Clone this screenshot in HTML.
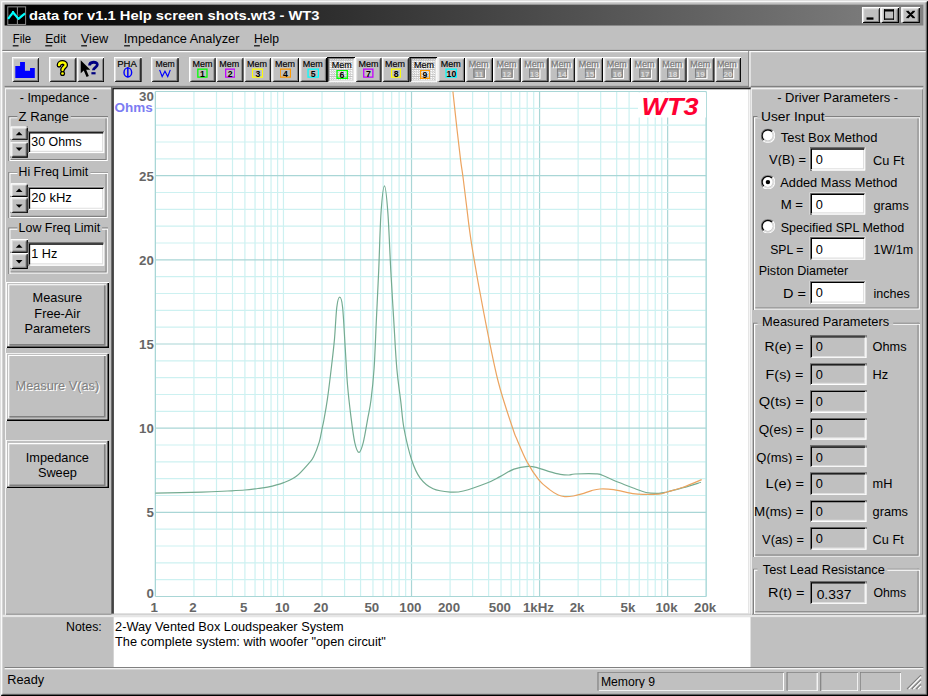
<!DOCTYPE html>
<html><head><meta charset="utf-8"><style>
html,body{margin:0;padding:0;width:928px;height:696px;overflow:hidden;background:#c0c0c0;}
#w{position:absolute;left:0;top:0;width:800px;height:600px;transform:scale(1.16);transform-origin:0 0;}
#w div{position:absolute;box-sizing:border-box;}
.t{white-space:pre;font-family:"Liberation Sans",sans-serif;}
</style></head><body>
<div id="w">
<div style="left:0px;top:0px;width:800px;height:600px;background:#c0c0c0;box-shadow:inset 1px 1px #dfdfdf,inset -1px -1px #000,inset 2px 2px #fff,inset -2px -2px #808080;"></div>
<div style="left:4px;top:4.4px;width:792px;height:18.1px;background:linear-gradient(90deg,#000 0%,#828282 100%);"></div>
<svg style="left:6px;top:5px;position:absolute" width="17" height="17" viewBox="0 0 17 17"><rect x="0.7" y="0.9" width="15.4" height="15.2" fill="#000" stroke="#8a8a8a" stroke-width="0.9"/><line x1="9" y1="1" x2="9" y2="16" stroke="#8a8a8a" stroke-width="0.9"/><line x1="1" y1="8" x2="16" y2="8" stroke="#3a3a3a" stroke-width="0.8"/><polyline points="1,11.3 5.2,5.6 9.9,11.3 15.6,6.6" fill="none" stroke="#00ffff" stroke-width="1.9" stroke-linejoin="round"/><line x1="5.2" y1="4.4" x2="5.2" y2="7" stroke="#00ffff" stroke-width="1.6"/></svg>
<div class="t" style="left:25.3px;top:8.29px;font-size:11px;line-height:11px;font-weight:bold;color:#fff;transform:scaleX(1.1542);transform-origin:0 0;">data for v1.1 Help screen shots.wt3 - WT3</div>
<div style="left:743px;top:6px;width:16px;height:14px;background:#c0c0c0;box-shadow:inset 1px 1px #fff,inset -1px -1px #000,inset 2px 2px #dfdfdf,inset -2px -2px #808080;"></div>
<div style="left:759px;top:6px;width:16px;height:14px;background:#c0c0c0;box-shadow:inset 1px 1px #fff,inset -1px -1px #000,inset 2px 2px #dfdfdf,inset -2px -2px #808080;"></div>
<div style="left:777px;top:6px;width:16px;height:14px;background:#c0c0c0;box-shadow:inset 1px 1px #fff,inset -1px -1px #000,inset 2px 2px #dfdfdf,inset -2px -2px #808080;"></div>
<div style="left:747px;top:15px;width:6px;height:2px;background:#000;"></div>
<div style="left:762px;top:8px;width:9px;height:9px;box-shadow:inset 0 2px #000,inset 1px 0 #000,inset -1px 0 #000,inset 0 -1px #000;"></div>
<svg style="left:777px;top:6px;position:absolute" width="16" height="14" viewBox="0 0 16 14"><path d="M4.5 3.5 L10.5 9.5 M5.5 3.5 L11.5 9.5 M10.5 3.5 L4.5 9.5 M11.5 3.5 L5.5 9.5" stroke="#000" stroke-width="1"/></svg>
<div class="t" style="left:10.6px;top:27.69px;font-size:11px;line-height:11px;font-weight:normal;color:#000;transform:scaleX(0.8974);transform-origin:0 0;">File</div>
<div style="left:10.6px;top:38.6px;width:5.5px;height:1.1px;background:#000;"></div>
<div class="t" style="left:39px;top:27.69px;font-size:11px;line-height:11px;font-weight:normal;color:#000;transform:scaleX(0.9542);transform-origin:0 0;">Edit</div>
<div style="left:39px;top:38.6px;width:5.5px;height:1.1px;background:#000;"></div>
<div class="t" style="left:69.7px;top:27.69px;font-size:11px;line-height:11px;font-weight:normal;color:#000;">View</div>
<div style="left:69.7px;top:38.6px;width:5.5px;height:1.1px;background:#000;"></div>
<div class="t" style="left:106.7px;top:27.69px;font-size:11px;line-height:11px;font-weight:normal;color:#000;">Impedance Analyzer</div>
<div style="left:106.7px;top:38.6px;width:5.5px;height:1.1px;background:#000;"></div>
<div class="t" style="left:218.8px;top:27.69px;font-size:11px;line-height:11px;font-weight:normal;color:#000;transform:scaleX(0.9503);transform-origin:0 0;">Help</div>
<div style="left:218.8px;top:38.6px;width:5.5px;height:1.1px;background:#000;"></div>
<div style="left:2px;top:43px;width:796px;height:1px;background:#808080;"></div>
<div style="left:2px;top:44px;width:796px;height:1px;background:#fff;"></div>
<div style="left:10.4px;top:48.5px;width:23.84px;height:22.6px;background:#c0c0c0;box-shadow:inset 1px 1px #fff,inset -1px -1px #000,inset 2px 2px #dfdfdf,inset -2px -2px #808080;"></div>
<div style="left:42.2px;top:48.5px;width:23.84px;height:22.6px;background:#c0c0c0;box-shadow:inset 1px 1px #fff,inset -1px -1px #000,inset 2px 2px #dfdfdf,inset -2px -2px #808080;"></div>
<div style="left:66.1px;top:48.5px;width:23.84px;height:22.6px;background:#c0c0c0;box-shadow:inset 1px 1px #fff,inset -1px -1px #000,inset 2px 2px #dfdfdf,inset -2px -2px #808080;"></div>
<div style="left:98.4px;top:48.5px;width:23.84px;height:22.6px;background:#c0c0c0;box-shadow:inset 1px 1px #fff,inset -1px -1px #000,inset 2px 2px #dfdfdf,inset -2px -2px #808080;"></div>
<div style="left:130.4px;top:48.5px;width:23.84px;height:22.6px;background:#c0c0c0;box-shadow:inset 1px 1px #fff,inset -1px -1px #000,inset 2px 2px #dfdfdf,inset -2px -2px #808080;"></div>
<svg style="left:0;top:0;position:absolute" width="40" height="80" viewBox="0 0 40 80"><path d="M13.2 56.9 H17.3 V53.4 H21.5 V60.9 H25.9 V58.6 H30 V67.2 H13.2 Z" fill="#0000ff"/></svg>
<svg style="left:0;top:0;position:absolute" width="100" height="80" viewBox="0 0 100 80"><path d="M50.9 56.2 C50.9 53.2 56.6 53 56.6 56 C56.6 57.8 53.9 58.2 53.9 60.4" fill="none" stroke="#000" stroke-width="4.2" stroke-linecap="round"/><circle cx="53.9" cy="63.3" r="2.2" fill="#000"/><path d="M50.9 56.2 C50.9 53.2 56.6 53 56.6 56 C56.6 57.8 53.9 58.2 53.9 60.4" fill="none" stroke="#ffff00" stroke-width="2" stroke-linecap="round"/><circle cx="53.9" cy="63.3" r="1.1" fill="#ffff00"/><path d="M69.6 51.9 L69.6 63.2 L72.2 60.8 L74.6 66.4 L76.6 65.6 L74.3 60.2 L77.8 60.2 Z" fill="#000"/><path d="M77.2 56.4 C77.2 53 83.9 52.7 83.9 55.9 C83.9 58 80.5 58.1 80.5 60.6" fill="none" stroke="#000080" stroke-width="2.4"/><rect x="78.8" y="62.2" width="3.6" height="1.9" fill="#000080"/></svg>
<div class="t" style="left:101.3px;top:51.4px;font-size:8.5px;line-height:8.5px;font-weight:normal;color:#000;transform:scaleX(0.9666);transform-origin:0 0;-webkit-text-stroke:0.15px #000;">PHA</div>
<svg style="left:0;top:0;position:absolute" width="130" height="80" viewBox="0 0 130 80"><ellipse cx="110.2" cy="62.4" rx="3.3" ry="3.9" fill="none" stroke="#0000ff" stroke-width="1.2"/><line x1="110.2" y1="58" x2="110.2" y2="66.8" stroke="#0000ff" stroke-width="1.3"/></svg>
<div class="t" style="left:133.5px;top:51.4px;font-size:8.5px;line-height:8.5px;font-weight:normal;color:#000;transform:scaleX(0.8787);transform-origin:0 0;-webkit-text-stroke:0.15px #000;">Mem</div>
<svg style="left:0;top:0;position:absolute" width="160" height="80" viewBox="0 0 160 80"><polyline points="137.6,60.2 139.8,66 142.2,61.5 144.6,66 146.8,60.2" fill="none" stroke="#0000ff" stroke-width="1.0"/></svg>
<div style="left:162.6px;top:48.5px;width:23.84px;height:22.6px;background:#c0c0c0;box-shadow:inset 1px 1px #fff,inset -1px -1px #000,inset 2px 2px #dfdfdf,inset -2px -2px #808080;"></div>
<div class="t" style="left:165.5px;top:51.3px;font-size:8.5px;line-height:8.5px;font-weight:normal;color:#000;transform:scaleX(0.9105);transform-origin:0 0;-webkit-text-stroke:0.15px #000;">Mem</div>
<div style="left:169.8px;top:58.7px;width:9.6px;height:8.6px;box-shadow:inset 0 0 0 1.1px #00ff00;"></div>
<div class="t" style="left:172.51px;top:59.85px;font-size:7.5px;line-height:7.5px;font-weight:bold;color:#000;">1</div>
<div style="left:186.44px;top:48.5px;width:23.84px;height:22.6px;background:#c0c0c0;box-shadow:inset 1px 1px #fff,inset -1px -1px #000,inset 2px 2px #dfdfdf,inset -2px -2px #808080;"></div>
<div class="t" style="left:189.34px;top:51.3px;font-size:8.5px;line-height:8.5px;font-weight:normal;color:#000;transform:scaleX(0.9105);transform-origin:0 0;-webkit-text-stroke:0.15px #000;">Mem</div>
<div style="left:193.64px;top:58.7px;width:9.6px;height:8.6px;box-shadow:inset 0 0 0 1.1px #c000ff;"></div>
<div class="t" style="left:196.35px;top:59.85px;font-size:7.5px;line-height:7.5px;font-weight:bold;color:#000;">2</div>
<div style="left:210.28px;top:48.5px;width:23.84px;height:22.6px;background:#c0c0c0;box-shadow:inset 1px 1px #fff,inset -1px -1px #000,inset 2px 2px #dfdfdf,inset -2px -2px #808080;"></div>
<div class="t" style="left:213.18px;top:51.3px;font-size:8.5px;line-height:8.5px;font-weight:normal;color:#000;transform:scaleX(0.9105);transform-origin:0 0;-webkit-text-stroke:0.15px #000;">Mem</div>
<div style="left:217.48px;top:58.7px;width:9.6px;height:8.6px;box-shadow:inset 0 0 0 1.1px #ffff00;"></div>
<div class="t" style="left:220.19px;top:59.85px;font-size:7.5px;line-height:7.5px;font-weight:bold;color:#000;">3</div>
<div style="left:234.12px;top:48.5px;width:23.84px;height:22.6px;background:#c0c0c0;box-shadow:inset 1px 1px #fff,inset -1px -1px #000,inset 2px 2px #dfdfdf,inset -2px -2px #808080;"></div>
<div class="t" style="left:237.02px;top:51.3px;font-size:8.5px;line-height:8.5px;font-weight:normal;color:#000;transform:scaleX(0.9105);transform-origin:0 0;-webkit-text-stroke:0.15px #000;">Mem</div>
<div style="left:241.32px;top:58.7px;width:9.6px;height:8.6px;box-shadow:inset 0 0 0 1.1px #ff9900;"></div>
<div class="t" style="left:244.03px;top:59.85px;font-size:7.5px;line-height:7.5px;font-weight:bold;color:#000;">4</div>
<div style="left:257.96px;top:48.5px;width:23.84px;height:22.6px;background:#c0c0c0;box-shadow:inset 1px 1px #fff,inset -1px -1px #000,inset 2px 2px #dfdfdf,inset -2px -2px #808080;"></div>
<div class="t" style="left:260.86px;top:51.3px;font-size:8.5px;line-height:8.5px;font-weight:normal;color:#000;transform:scaleX(0.9105);transform-origin:0 0;-webkit-text-stroke:0.15px #000;">Mem</div>
<div style="left:265.16px;top:58.7px;width:9.6px;height:8.6px;box-shadow:inset 0 0 0 1.1px #00ffff;"></div>
<div class="t" style="left:267.87px;top:59.85px;font-size:7.5px;line-height:7.5px;font-weight:bold;color:#000;">5</div>
<div style="left:281.8px;top:48.5px;width:23.84px;height:22.6px;background-color:#c0c0c0;background-image:repeating-conic-gradient(#fff 0 25%,#c0c0c0 0 50%);background-size:2px 2px;box-shadow:inset 1px 1px #000,inset -1px -1px #fff,inset 2px 2px #808080,inset -2px -2px #dfdfdf;"></div>
<div class="t" style="left:285.7px;top:52.3px;font-size:8.5px;line-height:8.5px;font-weight:normal;color:#000;transform:scaleX(0.9105);transform-origin:0 0;-webkit-text-stroke:0.15px #000;">Mem</div>
<div style="left:290px;top:59.7px;width:9.6px;height:8.6px;box-shadow:inset 0 0 0 1.1px #00ff00;"></div>
<div class="t" style="left:292.71px;top:60.85px;font-size:7.5px;line-height:7.5px;font-weight:bold;color:#000;">6</div>
<div style="left:305.64px;top:48.5px;width:23.84px;height:22.6px;background:#c0c0c0;box-shadow:inset 1px 1px #fff,inset -1px -1px #000,inset 2px 2px #dfdfdf,inset -2px -2px #808080;"></div>
<div class="t" style="left:308.54px;top:51.3px;font-size:8.5px;line-height:8.5px;font-weight:normal;color:#000;transform:scaleX(0.9105);transform-origin:0 0;-webkit-text-stroke:0.15px #000;">Mem</div>
<div style="left:312.84px;top:58.7px;width:9.6px;height:8.6px;box-shadow:inset 0 0 0 1.1px #c000ff;"></div>
<div class="t" style="left:315.55px;top:59.85px;font-size:7.5px;line-height:7.5px;font-weight:bold;color:#000;">7</div>
<div style="left:329.48px;top:48.5px;width:23.84px;height:22.6px;background:#c0c0c0;box-shadow:inset 1px 1px #fff,inset -1px -1px #000,inset 2px 2px #dfdfdf,inset -2px -2px #808080;"></div>
<div class="t" style="left:332.38px;top:51.3px;font-size:8.5px;line-height:8.5px;font-weight:normal;color:#000;transform:scaleX(0.9105);transform-origin:0 0;-webkit-text-stroke:0.15px #000;">Mem</div>
<div style="left:336.68px;top:58.7px;width:9.6px;height:8.6px;box-shadow:inset 0 0 0 1.1px #ffff00;"></div>
<div class="t" style="left:339.39px;top:59.85px;font-size:7.5px;line-height:7.5px;font-weight:bold;color:#000;">8</div>
<div style="left:353.32px;top:48.5px;width:23.84px;height:22.6px;background-color:#c0c0c0;background-image:repeating-conic-gradient(#fff 0 25%,#c0c0c0 0 50%);background-size:2px 2px;box-shadow:inset 1px 1px #000,inset -1px -1px #fff,inset 2px 2px #808080,inset -2px -2px #dfdfdf;"></div>
<div class="t" style="left:357.22px;top:52.3px;font-size:8.5px;line-height:8.5px;font-weight:normal;color:#000;transform:scaleX(0.9105);transform-origin:0 0;-webkit-text-stroke:0.15px #000;">Mem</div>
<div style="left:361.52px;top:59.7px;width:9.6px;height:8.6px;box-shadow:inset 0 0 0 1.1px #ff9900;"></div>
<div class="t" style="left:364.23px;top:60.85px;font-size:7.5px;line-height:7.5px;font-weight:bold;color:#000;">9</div>
<div style="left:377.16px;top:48.5px;width:23.84px;height:22.6px;background:#c0c0c0;box-shadow:inset 1px 1px #fff,inset -1px -1px #000,inset 2px 2px #dfdfdf,inset -2px -2px #808080;"></div>
<div class="t" style="left:380.06px;top:51.3px;font-size:8.5px;line-height:8.5px;font-weight:normal;color:#000;transform:scaleX(0.9105);transform-origin:0 0;-webkit-text-stroke:0.15px #000;">Mem</div>
<div style="left:384.36px;top:58.7px;width:9.6px;height:8.6px;box-shadow:inset 0 0 0 1.1px #00ffff;"></div>
<div class="t" style="left:384.99px;top:59.85px;font-size:7.5px;line-height:7.5px;font-weight:bold;color:#000;">10</div>
<div style="left:401px;top:48.5px;width:23.84px;height:22.6px;background:#c0c0c0;box-shadow:inset 1px 1px #fff,inset -1px -1px #000,inset 2px 2px #dfdfdf,inset -2px -2px #808080;"></div>
<div class="t" style="left:404.9px;top:52.3px;font-size:8.5px;line-height:8.5px;font-weight:normal;color:#fff;transform:scaleX(0.9105);transform-origin:0 0;-webkit-text-stroke:0.3px #fff;">Mem</div>
<div class="t" style="left:403.9px;top:51.3px;font-size:8.5px;line-height:8.5px;font-weight:normal;color:#808080;transform:scaleX(0.9105);transform-origin:0 0;-webkit-text-stroke:0.3px #808080;">Mem</div>
<div style="left:409.2px;top:59.7px;width:9.6px;height:8.6px;background:#fff;"></div>
<div style="left:408.2px;top:58.7px;width:9.6px;height:8.6px;background:#a8a8a8;box-shadow:inset 0 0 0 1px #808080;"></div>
<div class="t" style="left:409.3px;top:60.27px;font-size:7px;line-height:7px;font-weight:bold;color:#dcdcdc;">11</div>
<div style="left:424.84px;top:48.5px;width:23.84px;height:22.6px;background:#c0c0c0;box-shadow:inset 1px 1px #fff,inset -1px -1px #000,inset 2px 2px #dfdfdf,inset -2px -2px #808080;"></div>
<div class="t" style="left:428.74px;top:52.3px;font-size:8.5px;line-height:8.5px;font-weight:normal;color:#fff;transform:scaleX(0.9105);transform-origin:0 0;-webkit-text-stroke:0.3px #fff;">Mem</div>
<div class="t" style="left:427.74px;top:51.3px;font-size:8.5px;line-height:8.5px;font-weight:normal;color:#808080;transform:scaleX(0.9105);transform-origin:0 0;-webkit-text-stroke:0.3px #808080;">Mem</div>
<div style="left:433.04px;top:59.7px;width:9.6px;height:8.6px;background:#fff;"></div>
<div style="left:432.04px;top:58.7px;width:9.6px;height:8.6px;background:#a8a8a8;box-shadow:inset 0 0 0 1px #808080;"></div>
<div class="t" style="left:432.95px;top:60.27px;font-size:7px;line-height:7px;font-weight:bold;color:#dcdcdc;">12</div>
<div style="left:448.68px;top:48.5px;width:23.84px;height:22.6px;background:#c0c0c0;box-shadow:inset 1px 1px #fff,inset -1px -1px #000,inset 2px 2px #dfdfdf,inset -2px -2px #808080;"></div>
<div class="t" style="left:452.58px;top:52.3px;font-size:8.5px;line-height:8.5px;font-weight:normal;color:#fff;transform:scaleX(0.9105);transform-origin:0 0;-webkit-text-stroke:0.3px #fff;">Mem</div>
<div class="t" style="left:451.58px;top:51.3px;font-size:8.5px;line-height:8.5px;font-weight:normal;color:#808080;transform:scaleX(0.9105);transform-origin:0 0;-webkit-text-stroke:0.3px #808080;">Mem</div>
<div style="left:456.88px;top:59.7px;width:9.6px;height:8.6px;background:#fff;"></div>
<div style="left:455.88px;top:58.7px;width:9.6px;height:8.6px;background:#a8a8a8;box-shadow:inset 0 0 0 1px #808080;"></div>
<div class="t" style="left:456.79px;top:60.27px;font-size:7px;line-height:7px;font-weight:bold;color:#dcdcdc;">13</div>
<div style="left:472.52px;top:48.5px;width:23.84px;height:22.6px;background:#c0c0c0;box-shadow:inset 1px 1px #fff,inset -1px -1px #000,inset 2px 2px #dfdfdf,inset -2px -2px #808080;"></div>
<div class="t" style="left:476.42px;top:52.3px;font-size:8.5px;line-height:8.5px;font-weight:normal;color:#fff;transform:scaleX(0.9105);transform-origin:0 0;-webkit-text-stroke:0.3px #fff;">Mem</div>
<div class="t" style="left:475.42px;top:51.3px;font-size:8.5px;line-height:8.5px;font-weight:normal;color:#808080;transform:scaleX(0.9105);transform-origin:0 0;-webkit-text-stroke:0.3px #808080;">Mem</div>
<div style="left:480.72px;top:59.7px;width:9.6px;height:8.6px;background:#fff;"></div>
<div style="left:479.72px;top:58.7px;width:9.6px;height:8.6px;background:#a8a8a8;box-shadow:inset 0 0 0 1px #808080;"></div>
<div class="t" style="left:480.63px;top:60.27px;font-size:7px;line-height:7px;font-weight:bold;color:#dcdcdc;">14</div>
<div style="left:496.36px;top:48.5px;width:23.84px;height:22.6px;background:#c0c0c0;box-shadow:inset 1px 1px #fff,inset -1px -1px #000,inset 2px 2px #dfdfdf,inset -2px -2px #808080;"></div>
<div class="t" style="left:500.26px;top:52.3px;font-size:8.5px;line-height:8.5px;font-weight:normal;color:#fff;transform:scaleX(0.9105);transform-origin:0 0;-webkit-text-stroke:0.3px #fff;">Mem</div>
<div class="t" style="left:499.26px;top:51.3px;font-size:8.5px;line-height:8.5px;font-weight:normal;color:#808080;transform:scaleX(0.9105);transform-origin:0 0;-webkit-text-stroke:0.3px #808080;">Mem</div>
<div style="left:504.56px;top:59.7px;width:9.6px;height:8.6px;background:#fff;"></div>
<div style="left:503.56px;top:58.7px;width:9.6px;height:8.6px;background:#a8a8a8;box-shadow:inset 0 0 0 1px #808080;"></div>
<div class="t" style="left:504.47px;top:60.27px;font-size:7px;line-height:7px;font-weight:bold;color:#dcdcdc;">15</div>
<div style="left:520.2px;top:48.5px;width:23.84px;height:22.6px;background:#c0c0c0;box-shadow:inset 1px 1px #fff,inset -1px -1px #000,inset 2px 2px #dfdfdf,inset -2px -2px #808080;"></div>
<div class="t" style="left:524.1px;top:52.3px;font-size:8.5px;line-height:8.5px;font-weight:normal;color:#fff;transform:scaleX(0.9105);transform-origin:0 0;-webkit-text-stroke:0.3px #fff;">Mem</div>
<div class="t" style="left:523.1px;top:51.3px;font-size:8.5px;line-height:8.5px;font-weight:normal;color:#808080;transform:scaleX(0.9105);transform-origin:0 0;-webkit-text-stroke:0.3px #808080;">Mem</div>
<div style="left:528.4px;top:59.7px;width:9.6px;height:8.6px;background:#fff;"></div>
<div style="left:527.4px;top:58.7px;width:9.6px;height:8.6px;background:#a8a8a8;box-shadow:inset 0 0 0 1px #808080;"></div>
<div class="t" style="left:528.31px;top:60.27px;font-size:7px;line-height:7px;font-weight:bold;color:#dcdcdc;">16</div>
<div style="left:544.04px;top:48.5px;width:23.84px;height:22.6px;background:#c0c0c0;box-shadow:inset 1px 1px #fff,inset -1px -1px #000,inset 2px 2px #dfdfdf,inset -2px -2px #808080;"></div>
<div class="t" style="left:547.94px;top:52.3px;font-size:8.5px;line-height:8.5px;font-weight:normal;color:#fff;transform:scaleX(0.9105);transform-origin:0 0;-webkit-text-stroke:0.3px #fff;">Mem</div>
<div class="t" style="left:546.94px;top:51.3px;font-size:8.5px;line-height:8.5px;font-weight:normal;color:#808080;transform:scaleX(0.9105);transform-origin:0 0;-webkit-text-stroke:0.3px #808080;">Mem</div>
<div style="left:552.24px;top:59.7px;width:9.6px;height:8.6px;background:#fff;"></div>
<div style="left:551.24px;top:58.7px;width:9.6px;height:8.6px;background:#a8a8a8;box-shadow:inset 0 0 0 1px #808080;"></div>
<div class="t" style="left:552.15px;top:60.27px;font-size:7px;line-height:7px;font-weight:bold;color:#dcdcdc;">17</div>
<div style="left:567.88px;top:48.5px;width:23.84px;height:22.6px;background:#c0c0c0;box-shadow:inset 1px 1px #fff,inset -1px -1px #000,inset 2px 2px #dfdfdf,inset -2px -2px #808080;"></div>
<div class="t" style="left:571.78px;top:52.3px;font-size:8.5px;line-height:8.5px;font-weight:normal;color:#fff;transform:scaleX(0.9105);transform-origin:0 0;-webkit-text-stroke:0.3px #fff;">Mem</div>
<div class="t" style="left:570.78px;top:51.3px;font-size:8.5px;line-height:8.5px;font-weight:normal;color:#808080;transform:scaleX(0.9105);transform-origin:0 0;-webkit-text-stroke:0.3px #808080;">Mem</div>
<div style="left:576.08px;top:59.7px;width:9.6px;height:8.6px;background:#fff;"></div>
<div style="left:575.08px;top:58.7px;width:9.6px;height:8.6px;background:#a8a8a8;box-shadow:inset 0 0 0 1px #808080;"></div>
<div class="t" style="left:575.99px;top:60.27px;font-size:7px;line-height:7px;font-weight:bold;color:#dcdcdc;">18</div>
<div style="left:591.72px;top:48.5px;width:23.84px;height:22.6px;background:#c0c0c0;box-shadow:inset 1px 1px #fff,inset -1px -1px #000,inset 2px 2px #dfdfdf,inset -2px -2px #808080;"></div>
<div class="t" style="left:595.62px;top:52.3px;font-size:8.5px;line-height:8.5px;font-weight:normal;color:#fff;transform:scaleX(0.9105);transform-origin:0 0;-webkit-text-stroke:0.3px #fff;">Mem</div>
<div class="t" style="left:594.62px;top:51.3px;font-size:8.5px;line-height:8.5px;font-weight:normal;color:#808080;transform:scaleX(0.9105);transform-origin:0 0;-webkit-text-stroke:0.3px #808080;">Mem</div>
<div style="left:599.92px;top:59.7px;width:9.6px;height:8.6px;background:#fff;"></div>
<div style="left:598.92px;top:58.7px;width:9.6px;height:8.6px;background:#a8a8a8;box-shadow:inset 0 0 0 1px #808080;"></div>
<div class="t" style="left:599.83px;top:60.27px;font-size:7px;line-height:7px;font-weight:bold;color:#dcdcdc;">19</div>
<div style="left:615.56px;top:48.5px;width:23.84px;height:22.6px;background:#c0c0c0;box-shadow:inset 1px 1px #fff,inset -1px -1px #000,inset 2px 2px #dfdfdf,inset -2px -2px #808080;"></div>
<div class="t" style="left:619.46px;top:52.3px;font-size:8.5px;line-height:8.5px;font-weight:normal;color:#fff;transform:scaleX(0.9105);transform-origin:0 0;-webkit-text-stroke:0.3px #fff;">Mem</div>
<div class="t" style="left:618.46px;top:51.3px;font-size:8.5px;line-height:8.5px;font-weight:normal;color:#808080;transform:scaleX(0.9105);transform-origin:0 0;-webkit-text-stroke:0.3px #808080;">Mem</div>
<div style="left:623.76px;top:59.7px;width:9.6px;height:8.6px;background:#fff;"></div>
<div style="left:622.76px;top:58.7px;width:9.6px;height:8.6px;background:#a8a8a8;box-shadow:inset 0 0 0 1px #808080;"></div>
<div class="t" style="left:623.67px;top:60.27px;font-size:7px;line-height:7px;font-weight:bold;color:#dcdcdc;">20</div>
<div style="left:4px;top:74px;width:792px;height:1px;background:#808080;"></div>
<div style="left:645px;top:44px;width:1px;height:31px;background:#808080;"></div>
<div style="left:4px;top:76px;width:93px;height:454px;box-shadow:inset 1px 1px #fff,inset -1px -1px #808080;"></div>
<div class="t" style="left:17.2px;top:78.69px;font-size:11px;line-height:11px;font-weight:normal;color:#000;transform:scaleX(0.9837);transform-origin:0 0;">- Impedance -</div>
<div style="left:7.2px;top:99.6px;width:86px;height:39.8px;box-shadow:inset 1px 1px #808080,inset -1px -1px #fff,inset 2px 2px #fff,inset -2px -2px #808080;"></div>
<div style="left:14.6px;top:96.6px;width:46.9px;height:6px;background:#c0c0c0;"></div>
<div class="t" style="left:16.3px;top:94.69px;font-size:11px;line-height:11px;font-weight:normal;color:#000;transform:scaleX(1.0280);transform-origin:0 0;">Z Range</div>
<div style="left:8.9px;top:109.3px;width:15.2px;height:12.2px;background:#c0c0c0;box-shadow:inset 1px 1px #fff,inset -1px -1px #000,inset 2px 2px #dfdfdf,inset -2px -2px #808080;"></div>
<div style="left:8.9px;top:121.5px;width:15.2px;height:14px;background:#c0c0c0;box-shadow:inset 1px 1px #fff,inset -1px -1px #000,inset 2px 2px #dfdfdf,inset -2px -2px #808080;"></div>
<svg style="left:8.9px;top:109.30px;position:absolute" width="16" height="26" viewBox="0 0 16 26"><path d="M4.6 7.6 L10.4 7.6 L7.5 4.6 Z" fill="#000"/><path d="M4.6 18.2 L10.4 18.2 L7.5 21.2 Z" fill="#000"/></svg>
<div style="left:24.1px;top:112.7px;width:66px;height:19.6px;background:#fff;box-shadow:inset 1px 1px #808080,inset -1px -1px #fff,inset 2px 2px #000,inset -2px -2px #dfdfdf;"></div>
<div class="t" style="left:27.2px;top:116.69px;font-size:11px;line-height:11px;font-weight:normal;color:#000;transform:scaleX(0.9719);transform-origin:0 0;">30 Ohms</div>
<div style="left:7.2px;top:147.95px;width:86px;height:39.8px;box-shadow:inset 1px 1px #808080,inset -1px -1px #fff,inset 2px 2px #fff,inset -2px -2px #808080;"></div>
<div style="left:14.6px;top:144.95px;width:63.5px;height:6px;background:#c0c0c0;"></div>
<div class="t" style="left:16.3px;top:143.04px;font-size:11px;line-height:11px;font-weight:normal;color:#000;transform:scaleX(0.9624);transform-origin:0 0;">Hi Freq Limit</div>
<div style="left:8.9px;top:157.65px;width:15.2px;height:12.2px;background:#c0c0c0;box-shadow:inset 1px 1px #fff,inset -1px -1px #000,inset 2px 2px #dfdfdf,inset -2px -2px #808080;"></div>
<div style="left:8.9px;top:169.85px;width:15.2px;height:14px;background:#c0c0c0;box-shadow:inset 1px 1px #fff,inset -1px -1px #000,inset 2px 2px #dfdfdf,inset -2px -2px #808080;"></div>
<svg style="left:8.9px;top:157.65px;position:absolute" width="16" height="26" viewBox="0 0 16 26"><path d="M4.6 7.6 L10.4 7.6 L7.5 4.6 Z" fill="#000"/><path d="M4.6 18.2 L10.4 18.2 L7.5 21.2 Z" fill="#000"/></svg>
<div style="left:24.1px;top:161.05px;width:66px;height:19.6px;background:#fff;box-shadow:inset 1px 1px #808080,inset -1px -1px #fff,inset 2px 2px #000,inset -2px -2px #dfdfdf;"></div>
<div class="t" style="left:27.2px;top:165.04px;font-size:11px;line-height:11px;font-weight:normal;color:#000;transform:scaleX(1.0190);transform-origin:0 0;">20 kHz</div>
<div style="left:7.2px;top:196.3px;width:86px;height:39.8px;box-shadow:inset 1px 1px #808080,inset -1px -1px #fff,inset 2px 2px #fff,inset -2px -2px #808080;"></div>
<div style="left:14.6px;top:193.3px;width:73.9px;height:6px;background:#c0c0c0;"></div>
<div class="t" style="left:16.3px;top:191.39px;font-size:11px;line-height:11px;font-weight:normal;color:#000;transform:scaleX(0.9757);transform-origin:0 0;">Low Freq Limit</div>
<div style="left:8.9px;top:206px;width:15.2px;height:12.2px;background:#c0c0c0;box-shadow:inset 1px 1px #fff,inset -1px -1px #000,inset 2px 2px #dfdfdf,inset -2px -2px #808080;"></div>
<div style="left:8.9px;top:218.2px;width:15.2px;height:14px;background:#c0c0c0;box-shadow:inset 1px 1px #fff,inset -1px -1px #000,inset 2px 2px #dfdfdf,inset -2px -2px #808080;"></div>
<svg style="left:8.9px;top:206.00px;position:absolute" width="16" height="26" viewBox="0 0 16 26"><path d="M4.6 7.6 L10.4 7.6 L7.5 4.6 Z" fill="#000"/><path d="M4.6 18.2 L10.4 18.2 L7.5 21.2 Z" fill="#000"/></svg>
<div style="left:24.1px;top:209.4px;width:66px;height:19.6px;background:#fff;box-shadow:inset 1px 1px #808080,inset -1px -1px #fff,inset 2px 2px #000,inset -2px -2px #dfdfdf;"></div>
<div class="t" style="left:27.2px;top:213.39px;font-size:11px;line-height:11px;font-weight:normal;color:#000;transform:scaleX(0.9901);transform-origin:0 0;">1 Hz</div>
<div style="left:5px;top:242.8px;width:88.8px;height:57.5px;background:#c0c0c0;box-shadow:inset 1px 1px #fff,inset -1.3px -1.3px #000;"></div>
<div style="left:7.2px;top:245px;width:84.2px;height:52.9px;box-shadow:inset 1px 1px #fff,inset -1.4px -1.4px #808080;"></div>
<div class="t" style="left:28.09px;top:251.39px;font-size:11px;line-height:11px;font-weight:normal;color:#000;">Measure</div>
<div class="t" style="left:29.64px;top:264.69px;font-size:11px;line-height:11px;font-weight:normal;color:#000;">Free-Air</div>
<div class="t" style="left:21.06px;top:278.09px;font-size:11px;line-height:11px;font-weight:normal;color:#000;">Parameters</div>
<div style="left:5px;top:304.1px;width:88.8px;height:58.6px;background:#c0c0c0;box-shadow:inset 1px 1px #fff,inset -1.3px -1.3px #000;"></div>
<div style="left:7.2px;top:306.3px;width:84.2px;height:54px;box-shadow:inset 1px 1px #fff,inset -1.4px -1.4px #808080;"></div>
<div class="t" style="left:14.42px;top:328.29px;font-size:11px;line-height:11px;font-weight:normal;color:#fff;">Measure V(as)</div>
<div class="t" style="left:13.42px;top:327.29px;font-size:11px;line-height:11px;font-weight:normal;color:#808080;">Measure V(as)</div>
<div style="left:5px;top:379.3px;width:88.8px;height:41.9px;background:#c0c0c0;box-shadow:inset 1px 1px #fff,inset -1.3px -1.3px #000;"></div>
<div style="left:7.2px;top:381.5px;width:84.2px;height:37.3px;box-shadow:inset 1px 1px #fff,inset -1.4px -1.4px #808080;"></div>
<div class="t" style="left:22.27px;top:389.29px;font-size:11px;line-height:11px;font-weight:normal;color:#000;">Impedance</div>
<div class="t" style="left:32.67px;top:402.49px;font-size:11px;line-height:11px;font-weight:normal;color:#000;">Sweep</div>
<div style="left:96px;top:75px;width:551px;height:454.3px;background:#fff;box-shadow:inset 1px 1px #808080,inset 2px 2px #000,inset -1px 0 #fff,inset -2px 0 #dfdfdf;"></div>
<div style="left:96px;top:529.3px;width:551px;height:1px;background:#d2d2d2;"></div>
<div style="left:646.5px;top:76px;width:149.5px;height:454.3px;background:#c0c0c0;box-shadow:inset 1px 1px #fff,inset -1px -1px #808080;"></div>
<div style="left:646px;top:44px;width:1px;height:31px;background:#fff;"></div>
<div class="t" style="left:669.8px;top:78.69px;font-size:11px;line-height:11px;font-weight:normal;color:#000;transform:scaleX(1.0157);transform-origin:0 0;">- Driver Parameters -</div>
<div style="left:648.7px;top:99.6px;width:144px;height:167.8px;box-shadow:inset 1px 1px #808080,inset -1px -1px #fff,inset 2px 2px #fff,inset -2px -2px #808080;"></div>
<div style="left:653px;top:96px;width:58px;height:6px;background:#c0c0c0;"></div>
<div class="t" style="left:655.6px;top:94.89px;font-size:11px;line-height:11px;font-weight:normal;color:#000;transform:scaleX(1.0811);transform-origin:0 0;">User Input</div>
<svg style="left:656.20px;top:111.40px;position:absolute" width="12" height="12" viewBox="0 0 12 12"><path d="M10.24 1.76 A6 6 0 0 0 1.76 10.24" fill="none" stroke="#808080" stroke-width="1"/><path d="M9.54 2.46 A5 5 0 0 0 2.46 9.54" fill="none" stroke="#000" stroke-width="1"/><path d="M1.76 10.24 A6 6 0 0 0 10.24 1.76" fill="none" stroke="#fff" stroke-width="1"/><path d="M2.46 9.54 A5 5 0 0 0 9.54 2.46" fill="none" stroke="#dfdfdf" stroke-width="1"/><circle cx="6" cy="6" r="4.1" fill="#fff"/></svg>
<div class="t" style="left:672.7px;top:112.69px;font-size:11px;line-height:11px;font-weight:normal;color:#000;transform:scaleX(1.0171);transform-origin:0 0;">Test Box Method</div>
<div class="t" style="left:663px;top:132.29px;font-size:11px;line-height:11px;font-weight:normal;color:#000;transform:scaleX(1.0100);transform-origin:0 0;">V(B) =</div>
<div style="left:697.8px;top:127px;width:48.6px;height:19.6px;background:#fff;box-shadow:inset 1px 1px #808080,inset -1px -1px #fff,inset 2px 2px #000,inset -2px -2px #dfdfdf;"></div>
<div class="t" style="left:703.3px;top:132.19px;font-size:11px;line-height:11px;font-weight:normal;color:#000;">0</div>
<div class="t" style="left:752.7px;top:132.69px;font-size:11px;line-height:11px;font-weight:normal;color:#000;">Cu Ft</div>
<svg style="left:656.20px;top:150.70px;position:absolute" width="12" height="12" viewBox="0 0 12 12"><path d="M10.24 1.76 A6 6 0 0 0 1.76 10.24" fill="none" stroke="#808080" stroke-width="1"/><path d="M9.54 2.46 A5 5 0 0 0 2.46 9.54" fill="none" stroke="#000" stroke-width="1"/><path d="M1.76 10.24 A6 6 0 0 0 10.24 1.76" fill="none" stroke="#fff" stroke-width="1"/><path d="M2.46 9.54 A5 5 0 0 0 9.54 2.46" fill="none" stroke="#dfdfdf" stroke-width="1"/><circle cx="6" cy="6" r="4.1" fill="#fff"/><circle cx="6" cy="6" r="1.9" fill="#000"/></svg>
<div class="t" style="left:672.7px;top:151.69px;font-size:11px;line-height:11px;font-weight:normal;color:#000;">Added Mass Method</div>
<div class="t" style="left:672.7px;top:171.49px;font-size:11px;line-height:11px;font-weight:normal;color:#000;transform:scaleX(1.0354);transform-origin:0 0;">M =</div>
<div style="left:697.8px;top:165.5px;width:48.6px;height:19.6px;background:#fff;box-shadow:inset 1px 1px #808080,inset -1px -1px #fff,inset 2px 2px #000,inset -2px -2px #dfdfdf;"></div>
<div class="t" style="left:703.3px;top:170.99px;font-size:11px;line-height:11px;font-weight:normal;color:#000;">0</div>
<div class="t" style="left:752.7px;top:171.69px;font-size:11px;line-height:11px;font-weight:normal;color:#000;transform:scaleX(0.9947);transform-origin:0 0;">grams</div>
<svg style="left:656.20px;top:189.20px;position:absolute" width="12" height="12" viewBox="0 0 12 12"><path d="M10.24 1.76 A6 6 0 0 0 1.76 10.24" fill="none" stroke="#808080" stroke-width="1"/><path d="M9.54 2.46 A5 5 0 0 0 2.46 9.54" fill="none" stroke="#000" stroke-width="1"/><path d="M1.76 10.24 A6 6 0 0 0 10.24 1.76" fill="none" stroke="#fff" stroke-width="1"/><path d="M2.46 9.54 A5 5 0 0 0 9.54 2.46" fill="none" stroke="#dfdfdf" stroke-width="1"/><circle cx="6" cy="6" r="4.1" fill="#fff"/></svg>
<div class="t" style="left:672.7px;top:190.69px;font-size:11px;line-height:11px;font-weight:normal;color:#000;transform:scaleX(0.9822);transform-origin:0 0;">Specified SPL Method</div>
<div class="t" style="left:663.5px;top:210.09px;font-size:11px;line-height:11px;font-weight:normal;color:#000;transform:scaleX(0.9535);transform-origin:0 0;">SPL =</div>
<div style="left:697.8px;top:204px;width:48.6px;height:19.6px;background:#fff;box-shadow:inset 1px 1px #808080,inset -1px -1px #fff,inset 2px 2px #000,inset -2px -2px #dfdfdf;"></div>
<div class="t" style="left:703.3px;top:209.59px;font-size:11px;line-height:11px;font-weight:normal;color:#000;">0</div>
<div class="t" style="left:753.3px;top:210.09px;font-size:11px;line-height:11px;font-weight:normal;color:#000;transform:scaleX(0.9787);transform-origin:0 0;">1W/1m</div>
<div class="t" style="left:654.1px;top:228.29px;font-size:11px;line-height:11px;font-weight:normal;color:#000;transform:scaleX(0.9875);transform-origin:0 0;">Piston Diameter</div>
<div class="t" style="left:675px;top:247.69px;font-size:11px;line-height:11px;font-weight:normal;color:#000;transform:scaleX(1.1365);transform-origin:0 0;">D =</div>
<div style="left:697.8px;top:241.8px;width:48.6px;height:19.8px;background:#fff;box-shadow:inset 1px 1px #808080,inset -1px -1px #fff,inset 2px 2px #000,inset -2px -2px #dfdfdf;"></div>
<div class="t" style="left:703.3px;top:247.19px;font-size:11px;line-height:11px;font-weight:normal;color:#000;">0</div>
<div class="t" style="left:752.7px;top:247.69px;font-size:11px;line-height:11px;font-weight:normal;color:#000;transform:scaleX(0.9807);transform-origin:0 0;">inches</div>
<div style="left:649px;top:277.6px;width:144px;height:202px;box-shadow:inset 1px 1px #808080,inset -1px -1px #fff,inset 2px 2px #fff,inset -2px -2px #808080;"></div>
<div style="left:653px;top:274px;width:117px;height:6px;background:#c0c0c0;"></div>
<div class="t" style="left:656.6px;top:271.89px;font-size:11px;line-height:11px;font-weight:normal;color:#000;transform:scaleX(1.0057);transform-origin:0 0;">Measured Parameters</div>
<div style="left:697.8px;top:289px;width:48.8px;height:19.5px;background:#c0c0c0;box-shadow:inset 1px 1px #808080,inset -1px -1px #fff,inset 2px 2px #000,inset -2px -2px #dfdfdf;"></div>
<div class="t" style="left:659.4px;top:294.09px;font-size:11px;line-height:11px;font-weight:normal;color:#000;transform:scaleX(1.0888);transform-origin:0 0;">R(e) =</div>
<div class="t" style="left:703.3px;top:293.99px;font-size:11px;line-height:11px;font-weight:normal;color:#000;">0</div>
<div class="t" style="left:752.2px;top:294.09px;font-size:11px;line-height:11px;font-weight:normal;color:#000;">Ohms</div>
<div style="left:697.8px;top:312.64px;width:48.8px;height:19.5px;background:#c0c0c0;box-shadow:inset 1px 1px #808080,inset -1px -1px #fff,inset 2px 2px #000,inset -2px -2px #dfdfdf;"></div>
<div class="t" style="left:660.4px;top:317.73px;font-size:11px;line-height:11px;font-weight:normal;color:#000;transform:scaleX(1.1235);transform-origin:0 0;">F(s) =</div>
<div class="t" style="left:703.3px;top:317.63px;font-size:11px;line-height:11px;font-weight:normal;color:#000;">0</div>
<div class="t" style="left:752.2px;top:317.73px;font-size:11px;line-height:11px;font-weight:normal;color:#000;">Hz</div>
<div style="left:697.8px;top:336.28px;width:48.8px;height:19.5px;background:#c0c0c0;box-shadow:inset 1px 1px #808080,inset -1px -1px #fff,inset 2px 2px #000,inset -2px -2px #dfdfdf;"></div>
<div class="t" style="left:654px;top:341.37px;font-size:11px;line-height:11px;font-weight:normal;color:#000;transform:scaleX(1.1497);transform-origin:0 0;">Q(ts) =</div>
<div class="t" style="left:703.3px;top:341.27px;font-size:11px;line-height:11px;font-weight:normal;color:#000;">0</div>
<div style="left:697.8px;top:359.92px;width:48.8px;height:19.5px;background:#c0c0c0;box-shadow:inset 1px 1px #808080,inset -1px -1px #fff,inset 2px 2px #000,inset -2px -2px #dfdfdf;"></div>
<div class="t" style="left:654px;top:365.01px;font-size:11px;line-height:11px;font-weight:normal;color:#000;transform:scaleX(1.0545);transform-origin:0 0;">Q(es) =</div>
<div class="t" style="left:703.3px;top:364.91px;font-size:11px;line-height:11px;font-weight:normal;color:#000;">0</div>
<div style="left:697.8px;top:383.56px;width:48.8px;height:19.5px;background:#c0c0c0;box-shadow:inset 1px 1px #808080,inset -1px -1px #fff,inset 2px 2px #000,inset -2px -2px #dfdfdf;"></div>
<div class="t" style="left:652.4px;top:388.65px;font-size:11px;line-height:11px;font-weight:normal;color:#000;transform:scaleX(1.0146);transform-origin:0 0;">Q(ms) =</div>
<div class="t" style="left:703.3px;top:388.55px;font-size:11px;line-height:11px;font-weight:normal;color:#000;">0</div>
<div style="left:697.8px;top:407.2px;width:48.8px;height:19.5px;background:#c0c0c0;box-shadow:inset 1px 1px #808080,inset -1px -1px #fff,inset 2px 2px #000,inset -2px -2px #dfdfdf;"></div>
<div class="t" style="left:659.8px;top:412.29px;font-size:11px;line-height:11px;font-weight:normal;color:#000;transform:scaleX(1.1430);transform-origin:0 0;">L(e) =</div>
<div class="t" style="left:703.3px;top:412.19px;font-size:11px;line-height:11px;font-weight:normal;color:#000;">0</div>
<div class="t" style="left:752.2px;top:412.29px;font-size:11px;line-height:11px;font-weight:normal;color:#000;">mH</div>
<div style="left:697.8px;top:430.84px;width:48.8px;height:19.5px;background:#c0c0c0;box-shadow:inset 1px 1px #808080,inset -1px -1px #fff,inset 2px 2px #000,inset -2px -2px #dfdfdf;"></div>
<div class="t" style="left:650.3px;top:435.93px;font-size:11px;line-height:11px;font-weight:normal;color:#000;transform:scaleX(1.0515);transform-origin:0 0;">M(ms) =</div>
<div class="t" style="left:703.3px;top:435.83px;font-size:11px;line-height:11px;font-weight:normal;color:#000;">0</div>
<div class="t" style="left:752.2px;top:435.93px;font-size:11px;line-height:11px;font-weight:normal;color:#000;">grams</div>
<div style="left:697.8px;top:454.48px;width:48.8px;height:19.5px;background:#c0c0c0;box-shadow:inset 1px 1px #808080,inset -1px -1px #fff,inset 2px 2px #000,inset -2px -2px #dfdfdf;"></div>
<div class="t" style="left:657px;top:459.57px;font-size:11px;line-height:11px;font-weight:normal;color:#000;transform:scaleX(1.0066);transform-origin:0 0;">V(as) =</div>
<div class="t" style="left:703.3px;top:459.47px;font-size:11px;line-height:11px;font-weight:normal;color:#000;">0</div>
<div class="t" style="left:752.2px;top:459.57px;font-size:11px;line-height:11px;font-weight:normal;color:#000;">Cu Ft</div>
<div style="left:649px;top:490.1px;width:144px;height:38.9px;box-shadow:inset 1px 1px #808080,inset -1px -1px #fff,inset 2px 2px #fff,inset -2px -2px #808080;"></div>
<div style="left:653px;top:487px;width:112px;height:6px;background:#c0c0c0;"></div>
<div class="t" style="left:657.6px;top:485.69px;font-size:11px;line-height:11px;font-weight:normal;color:#000;">Test Lead Resistance</div>
<div style="left:697.8px;top:501.3px;width:48.8px;height:19.7px;background:#c0c0c0;box-shadow:inset 1px 1px #808080,inset -1px -1px #fff,inset 2px 2px #000,inset -2px -2px #dfdfdf;"></div>
<div class="t" style="left:661.9px;top:506.19px;font-size:11px;line-height:11px;font-weight:normal;color:#000;transform:scaleX(1.1368);transform-origin:0 0;">R(t) =</div>
<div class="t" style="left:704px;top:506.69px;font-size:11px;line-height:11px;font-weight:normal;color:#000;transform:scaleX(1.0884);transform-origin:0 0;">0.337</div>
<div class="t" style="left:752.5px;top:506.19px;font-size:11px;line-height:11px;font-weight:normal;color:#000;transform:scaleX(0.9610);transform-origin:0 0;">Ohms</div>
<div style="left:2px;top:530.3px;width:796px;height:1.9px;background:#e6e6e6;"></div>
<div style="left:97.9px;top:532.3px;width:549.3px;height:42.9px;background:#fff;"></div>
<div class="t" style="left:57.3px;top:534.69px;font-size:11px;line-height:11px;font-weight:normal;color:#000;transform:scaleX(0.9650);transform-origin:0 0;">Notes:</div>
<div class="t" style="left:99.2px;top:534.69px;font-size:11px;line-height:11px;font-weight:normal;color:#000;">2-Way Vented Box Loudspeaker System</div>
<div class="t" style="left:99.2px;top:548.19px;font-size:11px;line-height:11px;font-weight:normal;color:#000;">The complete system: with woofer "open circuit"</div>
<div style="left:4px;top:575.2px;width:792px;height:1px;background:#808080;"></div>
<div style="left:4px;top:576.4px;width:792px;height:1px;background:#fff;"></div>
<div style="left:514.7px;top:579.3px;width:161.2px;height:16.5px;box-shadow:inset 1px 1px #808080,inset -1px -1px #fff;"></div>
<div style="left:677.6px;top:579.3px;width:27.6px;height:16.5px;box-shadow:inset 1px 1px #808080,inset -1px -1px #fff;"></div>
<div style="left:706.9px;top:579.3px;width:32.8px;height:16.5px;box-shadow:inset 1px 1px #808080,inset -1px -1px #fff;"></div>
<div style="left:741.4px;top:579.3px;width:35.3px;height:16.5px;box-shadow:inset 1px 1px #808080,inset -1px -1px #fff;"></div>
<div class="t" style="left:6.3px;top:581.49px;font-size:11px;line-height:11px;font-weight:normal;color:#000;">Ready</div>
<div class="t" style="left:517.6px;top:581.69px;font-size:11px;line-height:11px;font-weight:normal;color:#000;transform:scaleX(0.9569);transform-origin:0 0;">Memory 9</div>
<svg style="left:781px;top:581px;position:absolute" width="14" height="14" viewBox="0 0 14 14"><path d="M13 1 L1 13 M13 5 L5 13 M13 9 L9 13" stroke="#808080" stroke-width="1.2"/><path d="M13 2.4 L2.4 13 M13 6.4 L6.4 13 M13 10.4 L10.4 13" stroke="#fff" stroke-width="1"/></svg>
</div>
<svg style="position:absolute;left:0;top:0" width="928" height="696" viewBox="0 0 928 696"><line x1="155.40" y1="91.51" x2="155.40" y2="596.50" stroke="#cdf1f1" stroke-width="1.2"/><line x1="193.95" y1="91.51" x2="193.95" y2="596.50" stroke="#cdf1f1" stroke-width="1.2"/><line x1="216.50" y1="91.51" x2="216.50" y2="596.50" stroke="#cdf1f1" stroke-width="1.2"/><line x1="232.50" y1="91.51" x2="232.50" y2="596.50" stroke="#cdf1f1" stroke-width="1.2"/><line x1="244.91" y1="91.51" x2="244.91" y2="596.50" stroke="#cdf1f1" stroke-width="1.2"/><line x1="255.05" y1="91.51" x2="255.05" y2="596.50" stroke="#cdf1f1" stroke-width="1.2"/><line x1="263.62" y1="91.51" x2="263.62" y2="596.50" stroke="#cdf1f1" stroke-width="1.2"/><line x1="271.05" y1="91.51" x2="271.05" y2="596.50" stroke="#cdf1f1" stroke-width="1.2"/><line x1="277.60" y1="91.51" x2="277.60" y2="596.50" stroke="#cdf1f1" stroke-width="1.2"/><line x1="283.46" y1="91.51" x2="283.46" y2="596.50" stroke="#cdf1f1" stroke-width="1.2"/><line x1="322.01" y1="91.51" x2="322.01" y2="596.50" stroke="#cdf1f1" stroke-width="1.2"/><line x1="344.56" y1="91.51" x2="344.56" y2="596.50" stroke="#cdf1f1" stroke-width="1.2"/><line x1="360.56" y1="91.51" x2="360.56" y2="596.50" stroke="#cdf1f1" stroke-width="1.2"/><line x1="372.97" y1="91.51" x2="372.97" y2="596.50" stroke="#cdf1f1" stroke-width="1.2"/><line x1="383.11" y1="91.51" x2="383.11" y2="596.50" stroke="#cdf1f1" stroke-width="1.2"/><line x1="391.68" y1="91.51" x2="391.68" y2="596.50" stroke="#cdf1f1" stroke-width="1.2"/><line x1="399.11" y1="91.51" x2="399.11" y2="596.50" stroke="#cdf1f1" stroke-width="1.2"/><line x1="405.66" y1="91.51" x2="405.66" y2="596.50" stroke="#cdf1f1" stroke-width="1.2"/><line x1="411.52" y1="91.51" x2="411.52" y2="596.50" stroke="#a9d6d6" stroke-width="1.2"/><line x1="450.07" y1="91.51" x2="450.07" y2="596.50" stroke="#cdf1f1" stroke-width="1.2"/><line x1="472.62" y1="91.51" x2="472.62" y2="596.50" stroke="#cdf1f1" stroke-width="1.2"/><line x1="488.62" y1="91.51" x2="488.62" y2="596.50" stroke="#cdf1f1" stroke-width="1.2"/><line x1="501.03" y1="91.51" x2="501.03" y2="596.50" stroke="#cdf1f1" stroke-width="1.2"/><line x1="511.17" y1="91.51" x2="511.17" y2="596.50" stroke="#cdf1f1" stroke-width="1.2"/><line x1="519.74" y1="91.51" x2="519.74" y2="596.50" stroke="#cdf1f1" stroke-width="1.2"/><line x1="527.17" y1="91.51" x2="527.17" y2="596.50" stroke="#cdf1f1" stroke-width="1.2"/><line x1="533.72" y1="91.51" x2="533.72" y2="596.50" stroke="#cdf1f1" stroke-width="1.2"/><line x1="539.58" y1="91.51" x2="539.58" y2="596.50" stroke="#a9d6d6" stroke-width="1.2"/><line x1="578.13" y1="91.51" x2="578.13" y2="596.50" stroke="#cdf1f1" stroke-width="1.2"/><line x1="600.68" y1="91.51" x2="600.68" y2="596.50" stroke="#cdf1f1" stroke-width="1.2"/><line x1="616.68" y1="91.51" x2="616.68" y2="596.50" stroke="#cdf1f1" stroke-width="1.2"/><line x1="629.09" y1="91.51" x2="629.09" y2="596.50" stroke="#cdf1f1" stroke-width="1.2"/><line x1="639.23" y1="91.51" x2="639.23" y2="596.50" stroke="#cdf1f1" stroke-width="1.2"/><line x1="647.80" y1="91.51" x2="647.80" y2="596.50" stroke="#cdf1f1" stroke-width="1.2"/><line x1="655.23" y1="91.51" x2="655.23" y2="596.50" stroke="#cdf1f1" stroke-width="1.2"/><line x1="661.78" y1="91.51" x2="661.78" y2="596.50" stroke="#cdf1f1" stroke-width="1.2"/><line x1="667.64" y1="91.51" x2="667.64" y2="596.50" stroke="#a9d6d6" stroke-width="1.2"/><line x1="706.19" y1="91.51" x2="706.19" y2="596.50" stroke="#cdf1f1" stroke-width="1.2"/><line x1="155.40" y1="596.50" x2="706.19" y2="596.50" stroke="#a9d6d6" stroke-width="1.2"/><line x1="155.40" y1="579.67" x2="706.19" y2="579.67" stroke="#cdf1f1" stroke-width="1.2"/><line x1="155.40" y1="562.83" x2="706.19" y2="562.83" stroke="#cdf1f1" stroke-width="1.2"/><line x1="155.40" y1="546.00" x2="706.19" y2="546.00" stroke="#cdf1f1" stroke-width="1.2"/><line x1="155.40" y1="529.17" x2="706.19" y2="529.17" stroke="#cdf1f1" stroke-width="1.2"/><line x1="155.40" y1="512.34" x2="706.19" y2="512.34" stroke="#a9d6d6" stroke-width="1.2"/><line x1="155.40" y1="495.50" x2="706.19" y2="495.50" stroke="#cdf1f1" stroke-width="1.2"/><line x1="155.40" y1="478.67" x2="706.19" y2="478.67" stroke="#cdf1f1" stroke-width="1.2"/><line x1="155.40" y1="461.84" x2="706.19" y2="461.84" stroke="#cdf1f1" stroke-width="1.2"/><line x1="155.40" y1="445.00" x2="706.19" y2="445.00" stroke="#cdf1f1" stroke-width="1.2"/><line x1="155.40" y1="428.17" x2="706.19" y2="428.17" stroke="#a9d6d6" stroke-width="1.2"/><line x1="155.40" y1="411.34" x2="706.19" y2="411.34" stroke="#cdf1f1" stroke-width="1.2"/><line x1="155.40" y1="394.50" x2="706.19" y2="394.50" stroke="#cdf1f1" stroke-width="1.2"/><line x1="155.40" y1="377.67" x2="706.19" y2="377.67" stroke="#cdf1f1" stroke-width="1.2"/><line x1="155.40" y1="360.84" x2="706.19" y2="360.84" stroke="#cdf1f1" stroke-width="1.2"/><line x1="155.40" y1="344.00" x2="706.19" y2="344.00" stroke="#a9d6d6" stroke-width="1.2"/><line x1="155.40" y1="327.17" x2="706.19" y2="327.17" stroke="#cdf1f1" stroke-width="1.2"/><line x1="155.40" y1="310.34" x2="706.19" y2="310.34" stroke="#cdf1f1" stroke-width="1.2"/><line x1="155.40" y1="293.51" x2="706.19" y2="293.51" stroke="#cdf1f1" stroke-width="1.2"/><line x1="155.40" y1="276.67" x2="706.19" y2="276.67" stroke="#cdf1f1" stroke-width="1.2"/><line x1="155.40" y1="259.84" x2="706.19" y2="259.84" stroke="#a9d6d6" stroke-width="1.2"/><line x1="155.40" y1="243.01" x2="706.19" y2="243.01" stroke="#cdf1f1" stroke-width="1.2"/><line x1="155.40" y1="226.17" x2="706.19" y2="226.17" stroke="#cdf1f1" stroke-width="1.2"/><line x1="155.40" y1="209.34" x2="706.19" y2="209.34" stroke="#cdf1f1" stroke-width="1.2"/><line x1="155.40" y1="192.51" x2="706.19" y2="192.51" stroke="#cdf1f1" stroke-width="1.2"/><line x1="155.40" y1="175.68" x2="706.19" y2="175.68" stroke="#a9d6d6" stroke-width="1.2"/><line x1="155.40" y1="158.84" x2="706.19" y2="158.84" stroke="#cdf1f1" stroke-width="1.2"/><line x1="155.40" y1="142.01" x2="706.19" y2="142.01" stroke="#cdf1f1" stroke-width="1.2"/><line x1="155.40" y1="125.18" x2="706.19" y2="125.18" stroke="#cdf1f1" stroke-width="1.2"/><line x1="155.40" y1="108.34" x2="706.19" y2="108.34" stroke="#cdf1f1" stroke-width="1.2"/><line x1="155.40" y1="91.51" x2="706.19" y2="91.51" stroke="#a9d6d6" stroke-width="1.2"/><line x1="155.40" y1="91.51" x2="155.40" y2="596.50" stroke="#a9d6d6" stroke-width="1.2"/><line x1="706.19" y1="91.51" x2="706.19" y2="596.50" stroke="#a9d6d6" stroke-width="1.2"/><rect x="638" y="92.5" width="68" height="25" fill="#fff"/><text x="641.5" y="115" font-family="Liberation Sans" font-weight="bold" font-style="italic" font-size="24" fill="#ff0033" textLength="57" lengthAdjust="spacingAndGlyphs">WT3</text><path d="M155.40,493.20 C163.12,493.03 189.67,492.57 201.70,492.20 C213.73,491.83 220.42,491.37 227.60,491.00 C234.78,490.63 239.77,490.42 244.80,490.00 C249.83,489.58 254.00,488.97 257.80,488.50 C261.60,488.03 263.28,488.18 267.60,487.20 C271.92,486.22 278.92,484.42 283.70,482.60 C288.48,480.78 292.08,479.55 296.30,476.30 C300.52,473.05 306.12,466.35 309.00,463.10 C311.88,459.85 311.88,460.35 313.60,456.80 C315.32,453.25 317.87,446.60 319.30,441.80 C320.73,437.00 321.43,431.63 322.20,428.00 C322.97,424.37 323.03,424.80 323.90,420.00 C324.77,415.20 326.10,408.42 327.40,399.20 C328.70,389.98 330.52,374.75 331.70,364.70 C332.88,354.65 333.65,348.48 334.50,338.90 C335.35,329.32 335.93,314.15 336.80,307.20 C337.67,300.25 338.73,297.20 339.70,297.20 C340.67,297.20 341.68,298.82 342.60,307.20 C343.52,315.58 344.38,334.57 345.20,347.50 C346.02,360.43 346.55,373.32 347.50,384.80 C348.45,396.28 349.70,406.82 350.90,416.40 C352.10,425.98 353.35,436.30 354.70,442.30 C356.05,448.30 357.57,452.40 359.00,452.40 C360.43,452.40 361.87,447.82 363.30,442.30 C364.73,436.78 366.32,426.35 367.60,419.30 C368.88,412.25 369.92,408.50 371.00,400.00 C372.08,391.50 373.20,381.73 374.10,368.30 C375.00,354.87 375.63,335.68 376.40,319.40 C377.17,303.12 377.93,288.32 378.70,270.60 C379.47,252.88 380.03,227.23 381.00,213.10 C381.97,198.97 383.35,185.80 384.50,185.80 C385.65,185.80 386.85,198.97 387.90,213.10 C388.95,227.23 389.83,252.88 390.80,270.60 C391.77,288.32 392.70,303.12 393.70,319.40 C394.70,335.68 395.62,354.60 396.80,368.30 C397.98,382.00 399.60,391.57 400.80,401.60 C402.00,411.63 402.20,418.82 404.00,428.50 C405.80,438.18 408.90,451.43 411.60,459.70 C414.30,467.97 416.62,473.25 420.20,478.10 C423.78,482.95 428.08,486.47 433.10,488.80 C438.12,491.13 445.27,491.73 450.30,492.10 C455.33,492.47 457.18,492.52 463.30,491.00 C469.42,489.48 480.88,485.40 487.00,483.00 C493.12,480.60 495.50,478.92 500.00,476.60 C504.50,474.28 509.33,470.80 514.00,469.10 C518.67,467.40 524.05,466.62 528.00,466.40 C531.95,466.18 534.28,466.98 537.70,467.80 C541.12,468.62 544.73,470.22 548.50,471.30 C552.27,472.38 556.88,473.68 560.30,474.30 C563.72,474.92 566.55,475.05 569.00,475.00 C571.45,474.95 570.52,474.20 575.00,474.00 C579.48,473.80 591.35,473.60 595.90,473.80 C600.45,474.00 598.53,473.78 602.30,475.20 C606.07,476.62 613.10,480.08 618.50,482.30 C623.90,484.52 630.12,486.80 634.70,488.50 C639.28,490.20 641.97,491.70 646.00,492.50 C650.03,493.30 655.40,493.38 658.90,493.30 C662.40,493.22 662.97,492.93 667.00,492.00 C671.03,491.07 677.43,489.32 683.10,487.70 C688.77,486.08 698.02,483.20 701.00,482.30" fill="none" stroke="#74ab91" stroke-width="1.2"/><path d="M452.90,91.50 C453.62,98.08 455.90,119.43 457.20,131.00 C458.50,142.57 459.73,153.23 460.70,160.90 C461.67,168.57 462.05,169.73 463.00,177.00 C463.95,184.27 464.98,193.40 466.40,204.50 C467.82,215.60 468.72,226.17 471.50,243.60 C474.28,261.03 478.72,286.37 483.10,309.10 C487.48,331.83 492.85,360.10 497.80,380.00 C502.75,399.90 509.57,418.50 512.80,428.50 C516.03,438.50 514.85,434.48 517.20,440.00 C519.55,445.52 523.30,454.95 526.90,461.60 C530.50,468.25 535.02,475.23 538.80,479.90 C542.58,484.57 546.37,487.08 549.60,489.60 C552.83,492.12 555.68,493.83 558.20,495.00 C560.72,496.17 562.18,496.43 564.70,496.60 C567.22,496.77 570.43,496.45 573.30,496.00 C576.17,495.55 578.85,494.80 581.90,493.90 C584.95,493.00 588.58,491.42 591.60,490.60 C594.62,489.78 596.33,489.17 600.00,489.00 C603.67,488.83 609.72,489.15 613.60,489.60 C617.48,490.05 619.25,490.95 623.30,491.70 C627.35,492.45 631.97,493.70 637.90,494.10 C643.83,494.50 654.05,494.45 658.90,494.10 C663.75,493.75 662.97,493.15 667.00,492.00 C671.03,490.85 677.32,489.27 683.10,487.20 C688.88,485.13 698.60,480.87 701.70,479.60" fill="none" stroke="#eca460" stroke-width="1.2"/><text x="153.90" y="100.60" text-anchor="end" font-family="Liberation Sans" font-weight="bold" font-size="13.3" fill="#666666">30</text><text x="114.6" y="111.8" font-family="Liberation Sans" font-weight="bold" font-size="13" fill="#7c7cf2" textLength="38.2" lengthAdjust="spacingAndGlyphs">Ohms</text><text x="153.90" y="180.68" text-anchor="end" font-family="Liberation Sans" font-weight="bold" font-size="13.3" fill="#666666">25</text><text x="153.90" y="264.84" text-anchor="end" font-family="Liberation Sans" font-weight="bold" font-size="13.3" fill="#666666">20</text><text x="153.90" y="349.00" text-anchor="end" font-family="Liberation Sans" font-weight="bold" font-size="13.3" fill="#666666">15</text><text x="153.90" y="433.17" text-anchor="end" font-family="Liberation Sans" font-weight="bold" font-size="13.3" fill="#666666">10</text><text x="153.90" y="517.34" text-anchor="end" font-family="Liberation Sans" font-weight="bold" font-size="13.3" fill="#666666">5</text><text x="153.90" y="598.00" text-anchor="end" font-family="Liberation Sans" font-weight="bold" font-size="13.3" fill="#666666">0</text><text x="154.30" y="611.80" text-anchor="middle" font-family="Liberation Sans" font-weight="bold" font-size="13.3" fill="#666666">1</text><text x="192.85" y="611.80" text-anchor="middle" font-family="Liberation Sans" font-weight="bold" font-size="13.3" fill="#666666">2</text><text x="243.81" y="611.80" text-anchor="middle" font-family="Liberation Sans" font-weight="bold" font-size="13.3" fill="#666666">5</text><text x="282.36" y="611.80" text-anchor="middle" font-family="Liberation Sans" font-weight="bold" font-size="13.3" fill="#666666">10</text><text x="320.91" y="611.80" text-anchor="middle" font-family="Liberation Sans" font-weight="bold" font-size="13.3" fill="#666666">20</text><text x="371.87" y="611.80" text-anchor="middle" font-family="Liberation Sans" font-weight="bold" font-size="13.3" fill="#666666">50</text><text x="410.42" y="611.80" text-anchor="middle" font-family="Liberation Sans" font-weight="bold" font-size="13.3" fill="#666666">100</text><text x="448.97" y="611.80" text-anchor="middle" font-family="Liberation Sans" font-weight="bold" font-size="13.3" fill="#666666">200</text><text x="499.93" y="611.80" text-anchor="middle" font-family="Liberation Sans" font-weight="bold" font-size="13.3" fill="#666666">500</text><text x="538.48" y="611.80" text-anchor="middle" font-family="Liberation Sans" font-weight="bold" font-size="13.3" fill="#666666">1kHz</text><text x="577.03" y="611.80" text-anchor="middle" font-family="Liberation Sans" font-weight="bold" font-size="13.3" fill="#666666">2k</text><text x="627.99" y="611.80" text-anchor="middle" font-family="Liberation Sans" font-weight="bold" font-size="13.3" fill="#666666">5k</text><text x="666.54" y="611.80" text-anchor="middle" font-family="Liberation Sans" font-weight="bold" font-size="13.3" fill="#666666">10k</text><text x="705.09" y="611.80" text-anchor="middle" font-family="Liberation Sans" font-weight="bold" font-size="13.3" fill="#666666">20k</text></svg>
</body></html>
